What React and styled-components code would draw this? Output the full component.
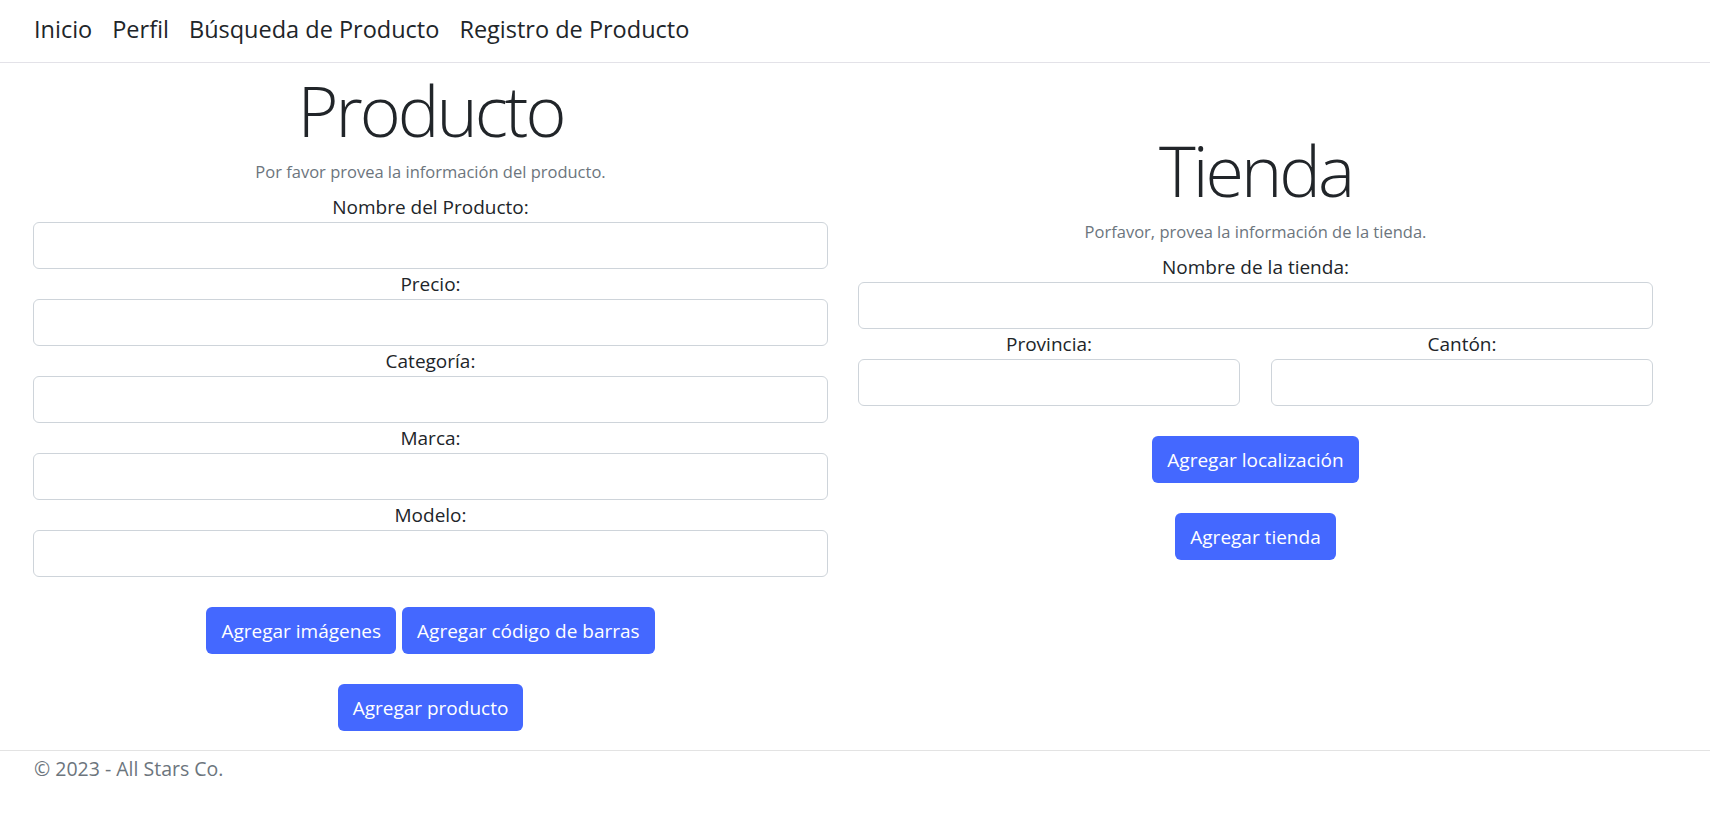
import React from 'react'
import styled, { createGlobalStyle } from 'styled-components'

const GlobalStyle = createGlobalStyle`
  * { box-sizing: border-box; }
  body {
    margin: 0;
    font-family: "Open Sans", "Noto Sans", sans-serif;
    font-size: 20px;
    color: #212529;
    background: #fff;
  }
`

const Page = styled.div`
  min-height: 100vh;
  display: flex;
  flex-direction: column;
`

const Header = styled.header`
  height: 63px;
  border-bottom: 1px solid #e3e2e8;
  display: flex;
  align-items: center;
  padding: 0 34px 5px;
`

const NavLink = styled.a`
  font-size: 23.5px;
  color: #212529;
  text-decoration: none;
  padding: 0 10px;
  cursor: pointer;
  &:first-child { padding-left: 0; }
`

const Main = styled.main`
  display: flex;
  padding: 0 18px;
  width: 1686px;
`

const Column = styled.section`
  width: 825px;
  padding: ${p => p.$top}px 15px 0;
  display: flex;
  flex-direction: column;
  align-items: center;
  text-align: center;
`

const Title = styled.h1`
  margin: 0;
  font-size: 70px;
  font-weight: 300;
  line-height: 86px;
  letter-spacing: -3px;
  color: #212529;
`

const Lead = styled.p`
  margin: 7px 0 8px;
  font-size: 16.5px;
  line-height: 24px;
  color: #6c757d;
`

const Field = styled.div`
  width: 100%;
  display: flex;
  flex-direction: column;
  align-items: center;
`

const Label = styled.label`
  font-size: 19px;
  line-height: 30px;
  color: #212529;
`

const Input = styled.input`
  width: 100%;
  height: 47px;
  border: 1px solid #ced4da;
  border-radius: 6px;
  padding: 7px 15px;
  font: inherit;
  outline: none;
`

const SplitRow = styled.div`
  width: 100%;
  display: grid;
  grid-template-columns: 1fr 1fr;
  column-gap: 31px;
`

const ButtonRow = styled.div`
  display: flex;
  justify-content: center;
  gap: 6px;
  margin-top: ${p => p.$mt || 30}px;
`

const Button = styled.button`
  height: 47px;
  padding: 0 15px;
  border: none;
  border-radius: 6px;
  background: #4468ff;
  color: #fff;
  font-family: inherit;
  font-size: 19px;
  cursor: pointer;
`

const Footer = styled.footer`
  margin-top: 19px;
  border-top: 1px solid #e3e3e3;
  padding: 2px 34px 0;
  font-size: 19.5px;
  line-height: 32px;
  color: #6c757d;
`

const productFields = ['Nombre del Producto:', 'Precio:', 'Categoría:', 'Marca:', 'Modelo:']

const App = () => {
  return (
    <Page>
      <GlobalStyle />
      <Header>
        <NavLink>Inicio</NavLink>
        <NavLink>Perfil</NavLink>
        <NavLink>Búsqueda de Producto</NavLink>
        <NavLink>Registro de Producto</NavLink>
      </Header>
      <Main>
        <Column $top={4}>
          <Title>Producto</Title>
          <Lead>Por favor provea la información del producto.</Lead>
          {productFields.map(label => (
            <Field key={label}>
              <Label>{label}</Label>
              <Input type="text" />
            </Field>
          ))}
          <ButtonRow $mt={30}>
            <Button>Agregar imágenes</Button>
            <Button>Agregar código de barras</Button>
          </ButtonRow>
          <ButtonRow>
            <Button>Agregar producto</Button>
          </ButtonRow>
        </Column>
        <Column $top={64}>
          <Title>Tienda</Title>
          <Lead>Porfavor, provea la información de la tienda.</Lead>
          <Field>
            <Label>Nombre de la tienda:</Label>
            <Input type="text" />
          </Field>
          <SplitRow>
            <Field>
              <Label>Provincia:</Label>
              <Input type="text" />
            </Field>
            <Field>
              <Label>Cantón:</Label>
              <Input type="text" />
            </Field>
          </SplitRow>
          <ButtonRow $mt={30}>
            <Button>Agregar localización</Button>
          </ButtonRow>
          <ButtonRow>
            <Button>Agregar tienda</Button>
          </ButtonRow>
        </Column>
      </Main>
      <Footer>© 2023 - All Stars Co.</Footer>
    </Page>
  )
}

export default App
